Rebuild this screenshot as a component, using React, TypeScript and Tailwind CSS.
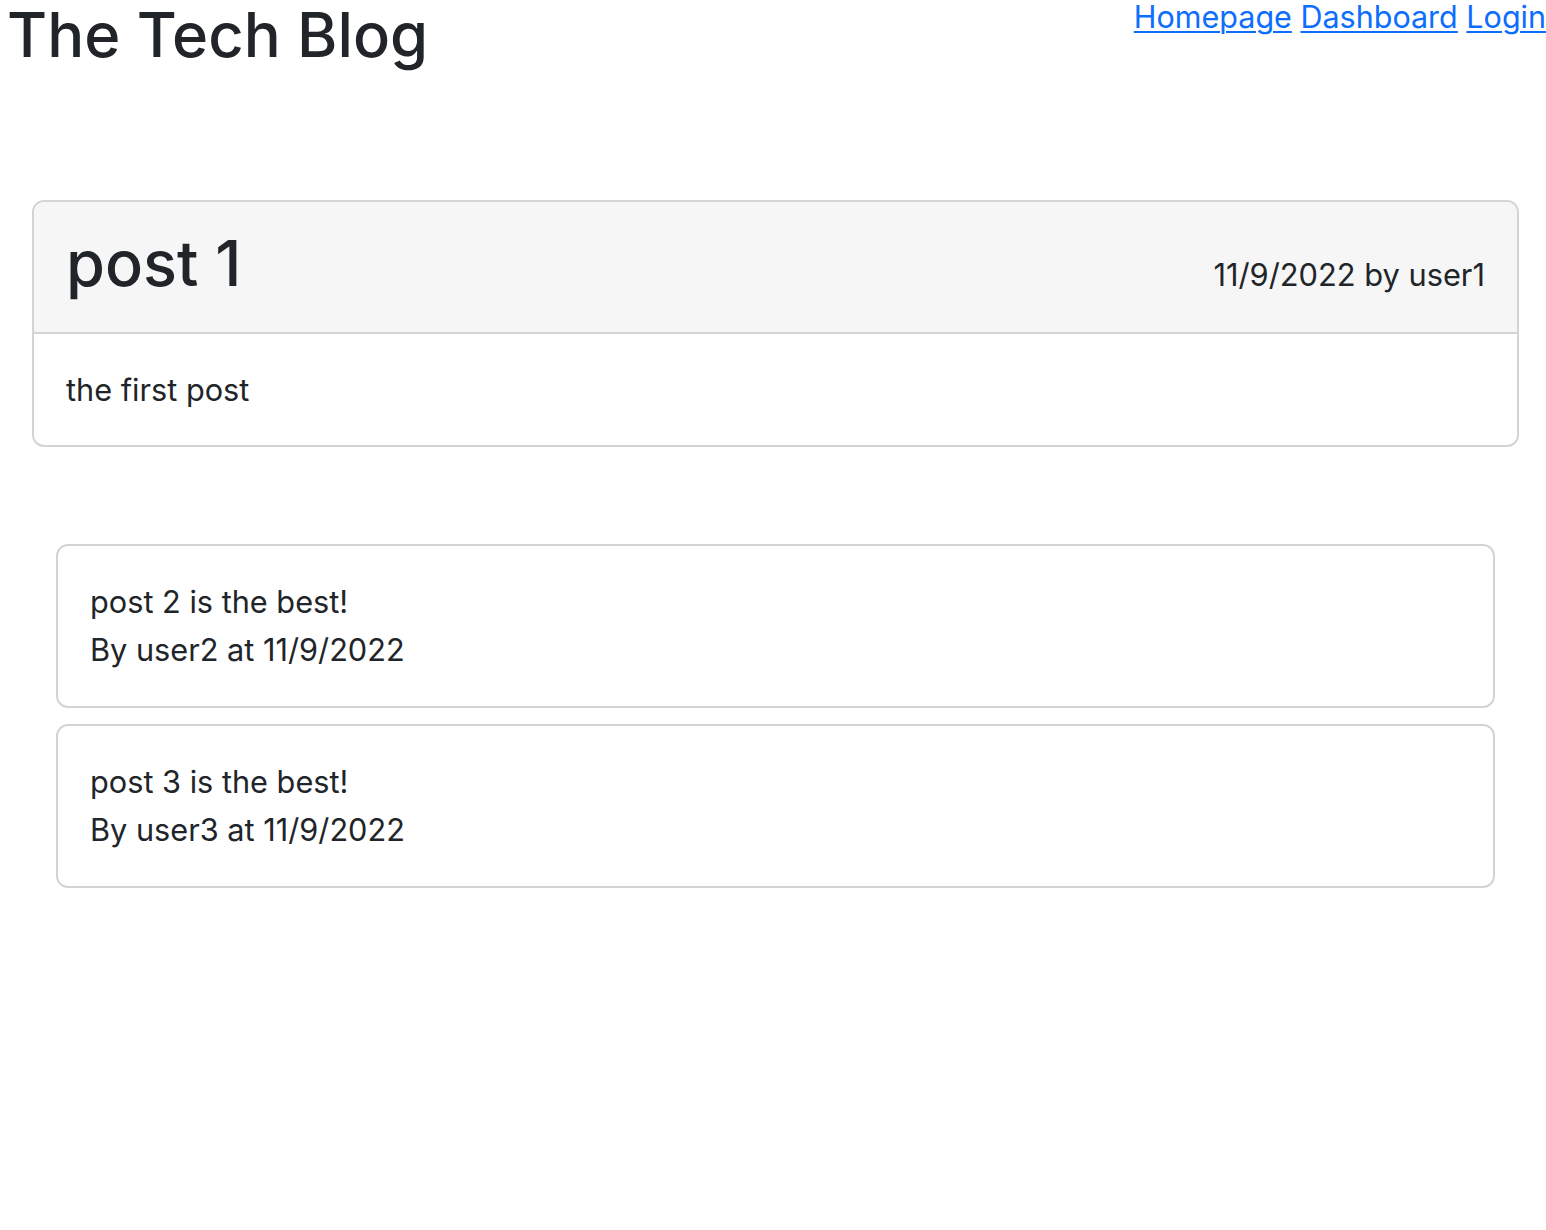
const posts = [
  { text: 'post 2 is the best!', user: 'user2', date: '11/9/2022' },
  { text: 'post 3 is the best!', user: 'user3', date: '11/9/2022' },
];

export default function App() {
  return (
    <div className="min-h-[1230px] bg-white font-['Inter','Liberation_Sans',sans-serif] text-[#212529]">
      <header className="flex items-start justify-between">
        <h1 className="ml-[7px] text-[61.5px] font-medium leading-[70px]">The Tech Blog</h1>
        <nav className="pt-[1px] text-[30.5px] leading-[32px]">
          <a href="#" className="text-[#0d6efd] underline decoration-2 underline-offset-[3px]">Homepage</a>{' '}
          <a href="#" className="text-[#0d6efd] underline decoration-2 underline-offset-[3px]">Dashboard</a>{' '}
          <a href="#" className="text-[#0d6efd] underline decoration-2 underline-offset-[3px]">Login</a>
        </nav>
      </header>

      <main className="pt-[130px]">
        <section className="ml-[32px] mr-[27px] overflow-hidden rounded-xl border-2 border-[#d4d4d4]">
          <div className="flex items-baseline justify-between border-b-2 border-[#d4d4d4] bg-[#f6f6f6] px-8 pb-[31px] pt-[23px]">
            <h2 className="text-[63px] font-medium leading-[76px]">post 1</h2>
            <span className="text-[30.8px] leading-[48px]">11/9/2022 by user1</span>
          </div>
          <div className="px-8 pb-[31px] pt-8 text-[30.7px] leading-[48px]">
            <p>the first post</p>
          </div>
        </section>

        <div className="mt-[97px] flex flex-col gap-4">
          {posts.map((p) => (
            <article
              key={p.user}
              className="ml-[56px] mr-[51px] rounded-xl border-2 border-[#d4d4d4] px-8 py-8 text-[30.7px] leading-[48px]"
            >
              <p>{p.text}</p>
              <p>
                By {p.user} at {p.date}
              </p>
            </article>
          ))}
        </div>
      </main>
    </div>
  );
}
